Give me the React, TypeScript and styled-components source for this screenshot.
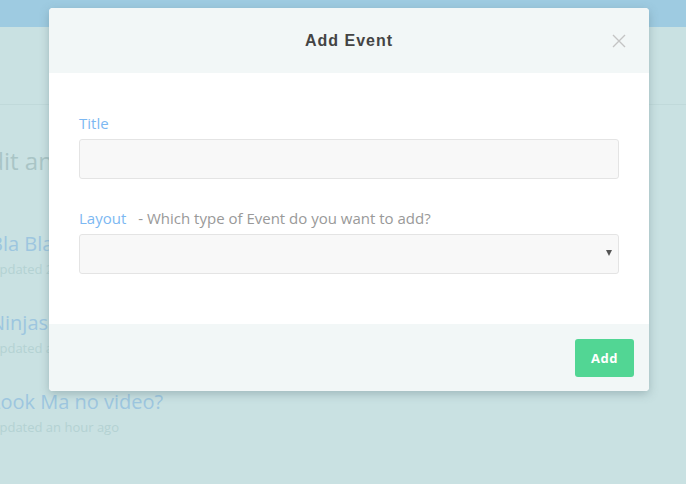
import React from "react";
import styled, { createGlobalStyle } from "styled-components";

const Global = createGlobalStyle`
  html, body { margin: 0; padding: 0; }
  body {
    width: 686px; height: 484px; overflow: hidden;
    background: #c9e1e2;
    font-family: "Open Sans", "Liberation Sans", sans-serif;
  }
`;

const Page = styled.div`
  position: relative;
  width: 686px;
  height: 484px;
  overflow: hidden;
  background: #c9e1e2;
`;

const TopBar = styled.div`
  height: 27px;
  background: #9ecbe1;
`;

const SubHeader = styled.div`
  height: 77px;
  border-bottom: 1px solid #c0d9da;
`;

const Content = styled.div`
  padding-top: 39px;
`;

const Heading = styled.h2`
  margin: 0 0 0 -24px;
  font-size: 24px;
  font-weight: 400;
  color: #a9c5c6;
  line-height: 34px;
  white-space: nowrap;
`;

const List = styled.ul`
  list-style: none;
  margin: 54px 0 0 -10px;
  padding: 0;
  display: flex;
  flex-direction: column;
  gap: 33px;
`;

const Item = styled.li`
  display: flex;
  flex-direction: column;
  gap: 4px;
`;

const ItemTitle = styled.span`
  font-size: 20px;
  color: #9dc6df;
  line-height: 24px;
  white-space: nowrap;
`;

const ItemMeta = styled.span`
  font-size: 13px;
  color: #b4d2d3;
  line-height: 18px;
  white-space: nowrap;
`;

const Overlay = styled.div`
  position: absolute;
  inset: 0;
  padding: 8px 0 0 49px;
`;

const Modal = styled.div`
  width: 600px;
  border-radius: 4px;
  overflow: hidden;
  background: #fff;
  box-shadow: 0 3px 10px rgba(80, 110, 115, 0.35);
`;

const Header = styled.div`
  position: relative;
  height: 65px;
  background: #f2f7f7;
  display: flex;
  align-items: center;
  justify-content: center;
`;

const HeaderTitle = styled.h3`
  margin: 0;
  font-family: "Liberation Sans", Arial, sans-serif;
  font-size: 16px;
  font-weight: 700;
  letter-spacing: 1px;
  color: #444;
`;

const Close = styled.button`
  position: absolute;
  right: 22px;
  top: 25px;
  width: 16px;
  height: 16px;
  padding: 0;
  border: 0;
  background: none;
  display: flex;
`;

const Body = styled.div`
  padding: 40px 30px 50px;
  display: flex;
  flex-direction: column;
  gap: 29px;
`;

const Field = styled.div`
  display: flex;
  flex-direction: column;
  gap: 6px;
`;

const LabelRow = styled.div`
  display: flex;
  align-items: baseline;
  gap: 12px;
  font-size: 15px;
  line-height: 20px;
`;

const Label = styled.label`
  color: #7cb8f2;
`;

const Hint = styled.span`
  color: #999;
`;

const Input = styled.div`
  height: 38px;
  border: 1px solid #e4e4e4;
  border-radius: 3px;
  background: #f8f8f8;
  position: relative;
`;

const Arrow = styled.span`
  position: absolute;
  right: 6px;
  top: 15px;
  width: 0;
  height: 0;
  border-left: 3px solid transparent;
  border-right: 3px solid transparent;
  border-top: 6px solid #555;
`;

const Footer = styled.div`
  height: 67px;
  background: #f2f7f7;
  display: flex;
  align-items: center;
  justify-content: flex-end;
  padding-right: 15px;
`;

const AddButton = styled.button`
  width: 59px;
  height: 38px;
  border: 0;
  border-radius: 3px;
  background: #52d694;
  color: #fff;
  font-family: "Open Sans", "Liberation Sans", sans-serif;
  font-weight: 700;
  font-size: 13px;
  letter-spacing: 0.5px;
`;

export default function App() {
  return (
    <Page>
      <Global />
      <TopBar />
      <SubHeader />
      <Content>
        <Heading>Edit and manage your events</Heading>
        <List>
          <Item>
            <ItemTitle>Bla Bla</ItemTitle>
            <ItemMeta>Updated 2 hours ago</ItemMeta>
          </Item>
          <Item>
            <ItemTitle>Ninjas</ItemTitle>
            <ItemMeta>Updated an hour ago</ItemMeta>
          </Item>
          <Item>
            <ItemTitle>Look Ma no video?</ItemTitle>
            <ItemMeta>Updated an hour ago</ItemMeta>
          </Item>
        </List>
      </Content>
      <Overlay>
        <Modal>
          <Header>
            <HeaderTitle>Add Event</HeaderTitle>
            <Close aria-label="Close">
              <svg width="16" height="16" viewBox="0 0 16 16">
                <path d="M2 2 L14 14 M14 2 L2 14" stroke="#c4c4c4" strokeWidth="1.4" />
              </svg>
            </Close>
          </Header>
          <Body>
            <Field>
              <LabelRow>
                <Label>Title</Label>
              </LabelRow>
              <Input />
            </Field>
            <Field>
              <LabelRow>
                <Label>Layout</Label>
                <Hint>- Which type of Event do you want to add?</Hint>
              </LabelRow>
              <Input>
                <Arrow />
              </Input>
            </Field>
          </Body>
          <Footer>
            <AddButton>Add</AddButton>
          </Footer>
        </Modal>
      </Overlay>
    </Page>
  );
}
